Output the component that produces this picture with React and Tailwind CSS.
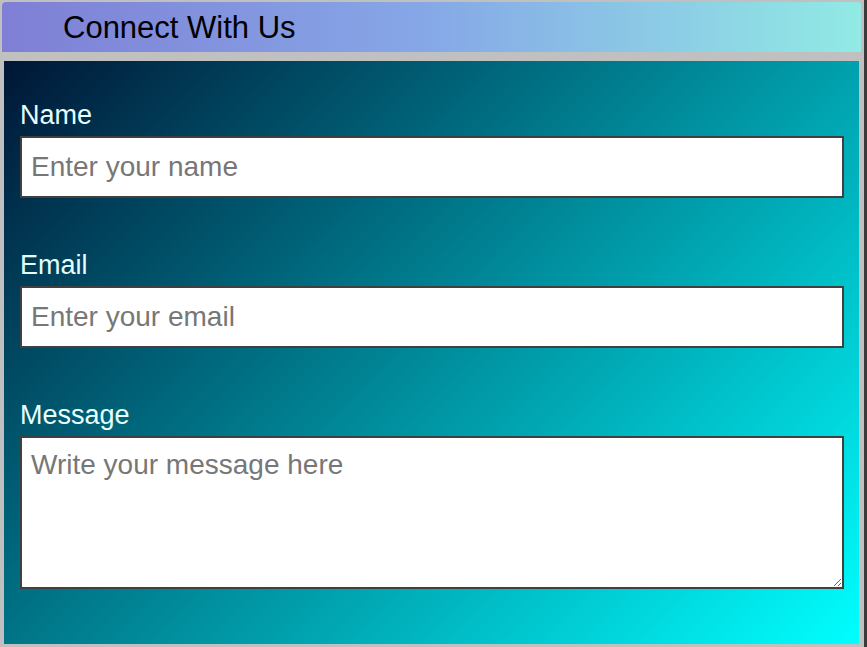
export default function App() {
  const font = { fontFamily: '"Liberation Sans", Arial, sans-serif' }

  return (
    <div className="flex h-[647px] w-[867px] overflow-hidden bg-[#c0c0c0]" style={font}>
      <div className="flex w-[864px] flex-col pl-[2px] pt-[2px]">
        <header className="flex h-[50px] w-[859px] items-center rounded-t-[4px] bg-[linear-gradient(to_right,#7f7fd5,#86a8e7,#91eae4)] pl-[61px]">
          <h1 className="text-[31px] leading-none text-black">Connect With Us</h1>
        </header>

        <form className="ml-[2px] mt-[9px] flex h-[583px] w-[855px] flex-col gap-[52px] bg-[linear-gradient(135deg,#001636,#00ffff)] pl-[16px] pr-[15px] pt-[39px]">
          <div className="flex flex-col gap-[6px]">
            <label className="text-[27px] leading-[30px] text-[#e6ffff]">Name</label>
            <input
              type="text"
              placeholder="Enter your name"
              className="h-[62px] w-full border-2 border-[#404040] bg-white px-[9px] text-[28px] text-black outline-none placeholder:text-[#777]"
            />
          </div>

          <div className="flex flex-col gap-[6px]">
            <label className="text-[27px] leading-[30px] text-[#e6ffff]">Email</label>
            <input
              type="email"
              placeholder="Enter your email"
              className="h-[62px] w-full border-2 border-[#404040] bg-white px-[9px] text-[28px] text-black outline-none placeholder:text-[#777]"
            />
          </div>

          <div className="flex flex-col gap-[6px]">
            <label className="text-[27px] leading-[30px] text-[#e6ffff]">Message</label>
            <textarea
              placeholder="Write your message here"
              className="h-[153px] w-full border-2 border-[#404040] bg-white px-[9px] py-[6px] text-[28px] text-black outline-none placeholder:text-[#777]"
            />
          </div>
        </form>
      </div>
      <div className="ml-auto w-[3px] bg-[#3a3a3a]" />
    </div>
  )
}
